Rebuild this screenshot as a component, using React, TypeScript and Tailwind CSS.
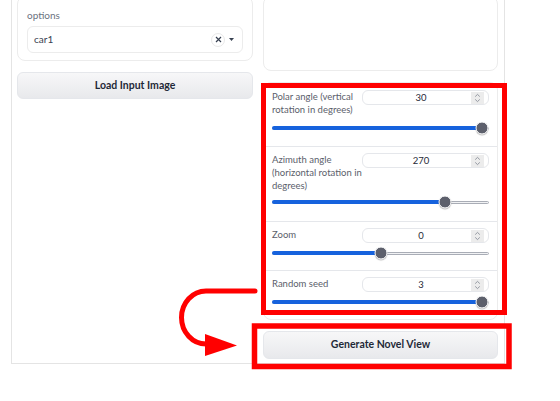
import React from 'react';

type SliderRow = {
  label: string[];
  value: string;
  frac: number;
  pad: string;
  gap: string;
};

const rows: SliderRow[] = [
  { label: ['Polar angle (vertical', 'rotation in degrees)'], value: '30', frac: 1, pad: 'pt-[7px] pb-[12px]', gap: 'mt-[6px]' },
  { label: ['Azimuth angle', '(horizontal rotation in', 'degrees)'], value: '270', frac: 0.82, pad: 'pt-[6px] pb-[13px] border-t border-[#e5e7eb]', gap: 'mt-[4px]' },
  { label: ['Zoom'], value: '0', frac: 0.5, pad: 'pt-[6px] pb-[11px] border-t border-[#e5e7eb]', gap: 'mt-[4px]' },
  { label: ['Random seed'], value: '3', frac: 1, pad: 'pt-[6px] pb-[11px] border-t border-[#e5e7eb]', gap: 'mt-[4px]' },
];

function Spinner() {
  return (
    <span className="flex h-[12px] w-[13px] items-center justify-center bg-[#ececec]">
      <svg width="7" height="10" viewBox="0 0 7 10" fill="none" stroke="#8a8f99" strokeWidth="0.9">
        <path d="M1.2 3.6 3.5 1.4 5.8 3.6" />
        <path d="M1.2 6.4 3.5 8.6 5.8 6.4" />
      </svg>
    </span>
  );
}

function Slider({ frac, gap }: { frac: number; gap: string }) {
  const pos = `calc(7px + ${frac} * (100% - 14px))`;
  return (
    <div className={`relative h-[12px] ${gap}`}>
      <div className="absolute left-0 right-0 top-[4.5px] h-[3px] rounded-full border border-[#a9adb6] bg-[#f1f2f4]" />
      <div className="absolute left-0 top-[4px] h-[4px] rounded-full bg-[#1662dd]" style={{ width: pos }} />
      <div
        className="absolute top-1/2 h-[13px] w-[13px] -translate-x-1/2 -translate-y-1/2 rounded-full border border-white bg-[#5d606c] shadow-[0_1px_1px_rgba(0,0,0,0.25)]"
        style={{ left: pos }}
      />
    </div>
  );
}

function Block({ row }: { row: SliderRow }) {
  return (
    <div className={`px-[8px] ${row.pad}`}>
      <div className="flex items-start gap-[2px]">
        <div className="w-[88px] text-[9.5px] leading-[13px] text-[#5b606b]">
          {row.label.map((l) => (
            <div key={l} className="whitespace-nowrap">{l}</div>
          ))}
        </div>
        <div className="flex h-[15px] flex-1 items-center rounded-[6px] border border-[#e5e7eb] bg-white pl-[8px] pr-[4px]">
          <span className="flex-1 text-center text-[9.5px] leading-none text-[#1f2937]">{row.value}</span>
          <Spinner />
        </div>
      </div>
      <Slider frac={row.frac} gap={row.gap} />
    </div>
  );
}

function Annotations() {
  return (
    <svg className="pointer-events-none absolute left-0 top-0" width="560" height="401" viewBox="0 0 560 401" fill="none">
      <rect x="263.5" y="85.5" width="241" height="227" stroke="#ff0000" strokeWidth="5" />
      <rect x="254.5" y="326" width="254.5" height="40.5" stroke="#ff0000" strokeWidth="5.5" />
      <path d="M255 291 H206 A24.5 26.5 0 0 0 206 344 H212" stroke="#ff0000" strokeWidth="5" strokeLinecap="round" />
      <path d="M205 334 L237 345.5 L205 356 Z" fill="#ff0000" />
    </svg>
  );
}

export default function App() {
  return (
    <div className="relative h-[401px] w-[560px] overflow-hidden bg-white font-['Lato',sans-serif]">
      <div className="ml-[11px] mt-[-10px] flex w-[494px] gap-[10px] border border-[#e4e4e4] pb-[4px] pl-[5px] pr-[6px] pt-[5px]">
        <div className="flex w-[236px] flex-col gap-[11px]">
          <div className="h-[65px] rounded-[8px] border border-[#ececec] px-[9px] pt-[11px]">
            <div className="h-[14px] text-[10px] leading-[14px] text-[#6b7280]">options</div>
            <div className="mt-[4px] flex h-[27px] items-center rounded-[6px] border border-[#ececec] pl-[6px] pr-[8px]">
              <span className="flex-1 text-[10px] text-[#374151]">car1</span>
              <span className="flex h-[14px] w-[14px] items-center justify-center rounded-full border border-[#e8e8e8]">
                <svg width="7" height="7" viewBox="0 0 7 7" stroke="#374151" strokeWidth="1.2">
                  <path d="M1 1 6 6 M6 1 1 6" />
                </svg>
              </span>
              <svg className="ml-[4px]" width="5" height="3" viewBox="0 0 5 3">
                <path d="M0 0 H5 L2.5 3 Z" fill="#374151" />
              </svg>
            </div>
          </div>
          <button className="h-[27px] rounded-[6px] border border-[#e5e7eb] bg-gradient-to-b from-[#f7f7f8] to-[#e8e9ec] text-[10.5px] font-bold text-[#1f2937]">
            Load Input Image
          </button>
        </div>
        <div className="flex w-[235px] flex-col gap-[11px]">
          <div className="h-[75px] rounded-[8px] border border-[#ececec]" />
          <div className="rounded-[8px] border border-[#ececec]">
            {rows.map((r) => (
              <Block key={r.value + r.label[0]} row={r} />
            ))}
          </div>
          <button className="h-[28px] rounded-[6px] border border-[#e5e7eb] bg-gradient-to-b from-[#f7f7f8] to-[#e8e9ec] text-[10.5px] font-bold text-[#1f2937]">
            Generate Novel View
          </button>
        </div>
      </div>
      <Annotations />
    </div>
  );
}
